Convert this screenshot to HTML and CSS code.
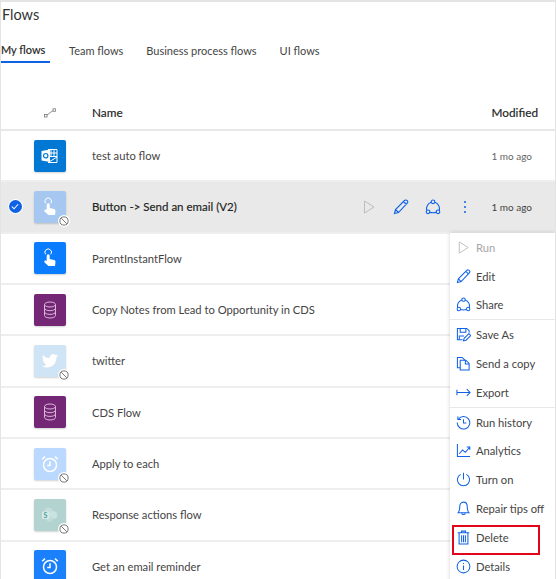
FILE: index.html
```html
<!DOCTYPE html>
<html lang="en">
<head>
<meta charset="utf-8">
<title>Flows</title>
<link rel="stylesheet" href="styles.css">
</head>
<body>
<svg class="defs" width="0" height="0" aria-hidden="true">
  <defs>
    <symbol id="i-touch" viewBox="0 0 20 20">
      <path fill="#fff" d="M8.200 6.200a1.500 1.500 0 0 1 1.500 1.500v3.300l4.400 1.100c.9.200 1.400 1 1.400 1.900l-.5 4H8.400L4.600 14.500c-.5-.6-.4-1.400.2-1.800.6-.4 1.300-.3 1.800.2l.1.100V7.700a1.500 1.500 0 0 1 1.500-1.500z"/>
      <path fill="none" stroke="#fff" stroke-width="1" d="M5.600 8.800a3.300 3.300 0 1 1 5.200 0" transform="translate(0 -2.500)"/>
    </symbol>
    <symbol id="i-db" viewBox="0 0 20 20">
      <g fill="none" stroke="#d9b6d9" stroke-width="1">
        <ellipse cx="10" cy="4.500" rx="5.500" ry="2.500"/>
        <path d="M4.500 4.500v11c0 1.400 2.500 2.500 5.500 2.500s5.500-1.100 5.500-2.500v-11M4.500 8.200c0 1.400 2.500 2.500 5.500 2.500s5.500-1.100 5.500-2.500M4.500 11.900c0 1.400 2.500 2.500 5.500 2.500s5.500-1.100 5.500-2.500"/>
      </g>
    </symbol>
    <symbol id="i-clock" viewBox="0 0 20 20">
      <g fill="none" stroke="#fff" stroke-width="1.500">
        <circle cx="10" cy="11" r="6.500"/>
        <path d="M10 7.200V11.500H7.200M2.200 5.200 5 2.600M17.800 5.200 15 2.600"/>
      </g>
    </symbol>
    <symbol id="i-play" viewBox="0 0 16 16">
      <path fill="none" stroke="currentColor" d="M3.500 2v12L13 8z"/>
    </symbol>
    <symbol id="i-edit" viewBox="0 0 16 16">
      <path fill="none" stroke="currentColor" stroke-width="1.100" d="M1.500 14.500 2.500 10.500 11.500 1.500c.8-.8 2-.7 2.700.1s.7 1.800 0 2.500L5.500 13.500zM2.500 10.500l3 3M10.500 2.500l3 3"/>
    </symbol>
    <symbol id="i-share" viewBox="0 0 16 16">
      <g fill="none" stroke="currentColor" stroke-width="1.100">
        <circle cx="8" cy="2.800" r="1.800"/>
        <circle cx="3" cy="12.800" r="1.800"/>
        <circle cx="13" cy="12.800" r="1.800"/>
        <path d="M6.300 3.300A6.800 6.800 0 0 0 1.700 11.500M9.700 3.300A6.800 6.800 0 0 1 14.300 11.500M4.800 13.400q3.200.8 6.400 0"/>
      </g>
    </symbol>
    <symbol id="i-saveas" viewBox="0 0 16 16">
      <g fill="none" stroke="currentColor" stroke-width="1.100">
        <path d="M7 13.500H1.500v-12h10l2.500 2.500v2"/>
        <path d="M4.500 1.500v4h6v-4M3.500 13.500v-4h5"/>
        <path d="M8 14.800l.7-2.700 5-5 2 2-5 5z"/>
      </g>
    </symbol>
    <symbol id="i-copy" viewBox="0 0 16 16">
      <g fill="none" stroke="currentColor" stroke-width="1.100">
        <path d="M4.500 12.500h-3v-11h5l3 3"/>
        <path d="M4.500 4.500h6l3.500 3.500v7H4.500z"/>
        <path d="M10 4.500V8.500h4"/>
      </g>
    </symbol>
    <symbol id="i-export" viewBox="0 0 16 16">
      <path fill="none" stroke="currentColor" stroke-width="1.100" d="M1 5v6M1 8h14M11.500 4.500 15 8l-3.500 3.500"/>
    </symbol>
    <symbol id="i-history" viewBox="0 0 16 16">
      <g fill="none" stroke="currentColor" stroke-width="1.100">
        <path d="M2.300 4.700A6.700 6.700 0 1 1 1.300 8"/>
        <path d="M2 1.500v3.400h3.400M8 4.500v4h3"/>
      </g>
    </symbol>
    <symbol id="i-analytics" viewBox="0 0 16 16">
      <path fill="none" stroke="currentColor" stroke-width="1.100" d="M1.500 1v13.500H15M3.500 11.500 7 7.500l3 2.500 4.500-5.500M11.500 4.300h3.200v3"/>
    </symbol>
    <symbol id="i-power" viewBox="0 0 16 16">
      <path fill="none" stroke="currentColor" stroke-width="1.100" d="M5 2.500a6.500 6.500 0 1 0 6 0M8 .8v7.200"/>
    </symbol>
    <symbol id="i-bell" viewBox="0 0 16 16">
      <path fill="none" stroke="currentColor" stroke-width="1.100" d="M8 1.200c2.700 0 4 2.200 4 4.800 0 3.500.5 5 1.800 6.500H2.200C3.500 11 4 9.500 4 6c0-2.600 1.300-4.800 4-4.800zM6.200 12.700c0 2.400 3.600 2.400 3.600 0"/>
    </symbol>
    <symbol id="i-trash" viewBox="0 0 16 16">
      <path fill="none" stroke="currentColor" stroke-width="1.100" d="M1.800 3h12.400M5.800 3V1.200h4.400V3M3.300 3v12h9.400V3M6 5.500v7.500M8 5.500v7.500M10 5.500v7.500"/>
    </symbol>
    <symbol id="i-info" viewBox="0 0 16 16">
      <g fill="none" stroke="currentColor" stroke-width="1.100">
        <circle cx="8" cy="8" r="6.800"/>
        <path d="M8 7v4.800M8 4.200v1.200"/>
      </g>
    </symbol>
    <symbol id="i-ban" viewBox="0 0 12 12">
      <circle cx="6" cy="6" r="4.100" fill="none" stroke="#777" stroke-width="1"/>
      <path d="M3.200 3.200l5.600 5.600" stroke="#777" stroke-width="1"/>
    </symbol>
  </defs>
</svg>

<main class="page">
  <h1 class="title">Flows</h1>
  <nav class="tabs">
    <span class="tab tab-active">My flows</span>
    <span class="tab">Team flows</span>
    <span class="tab">Business process flows</span>
    <span class="tab">UI flows</span>
  </nav>

  <div class="list-head">
    <span class="head-icon">
      <svg width="12" height="10" viewBox="0 0 12 10"><g fill="none" stroke="#777" stroke-width=".8"><rect x=".5" y="6.500" width="2.500" height="2.500"/><rect x="9" y=".8" width="2.500" height="2.500"/><path d="M3 7 9 2.500"/></g></svg>
    </span>
    <span class="head-name">Name</span>
    <span class="head-mod">Modified</span>
  </div>

  <div class="row">
    <span class="tile tile-outlook">
      <svg width="20" height="20" viewBox="0 0 20 20"><path fill="none" stroke="#fff" d="M8 3.500h9v13H8M8 7h9M8 10.500h9M11 3.500v7M14 3.500v7M9 16l8-5"/><path fill="#fff" d="M1.500 5 10 3.500v12.500L1.500 14.500z"/><circle cx="5.700" cy="9.700" r="2.200" fill="none" stroke="#0078d4" stroke-width="1.200"/></svg>
    </span>
    <span class="name">test auto flow</span>
    <span class="time">1 mo ago</span>
  </div>

  <div class="row row-selected">
    <span class="check"><svg width="10" height="8" viewBox="0 0 10 8"><path d="M1 4l2.800 2.800L9 1.200" fill="none" stroke="#fff" stroke-width="1.300"/></svg></span>
    <span class="tile tile-button">
      <svg width="20" height="20"><use href="#i-touch"/></svg>
      <span class="badge"><svg width="12" height="12"><use href="#i-ban"/></svg></span>
    </span>
    <span class="name name-strong">Button -&gt; Send an email (V2)</span>
    <span class="actions">
      <svg class="act act-off" width="16" height="16"><use href="#i-play"/></svg>
      <svg class="act" width="16" height="16"><use href="#i-edit"/></svg>
      <svg class="act" width="16" height="16"><use href="#i-share"/></svg>
      <svg class="act" width="16" height="16" viewBox="0 0 16 16"><path d="M8 2v2M8 7v2M8 12v2" stroke="currentColor" stroke-width="1.500"/></svg>
    </span>
    <span class="time">1 mo ago</span>
  </div>

  <div class="row">
    <span class="tile tile-blue"><svg width="20" height="20"><use href="#i-touch"/></svg></span>
    <span class="name">ParentInstantFlow</span>
  </div>

  <div class="row">
    <span class="tile tile-cds"><svg width="20" height="20"><use href="#i-db"/></svg></span>
    <span class="name">Copy Notes from Lead to Opportunity in CDS</span>
  </div>

  <div class="row">
    <span class="tile tile-twitter">
      <svg width="20" height="20" viewBox="0 0 20 20"><path fill="#fff" d="M18 4.500c-.6.300-1.200.400-1.900.500.700-.4 1.200-1 1.400-1.800-.6.400-1.300.6-2 .8a3.300 3.300 0 0 0-5.600 3C7.200 7.300 4.800 6 3.100 4c-.9 1.500-.4 3.400 1 4.400-.5 0-1-.2-1.500-.4 0 1.600 1.100 3 2.600 3.300-.5.100-1 .1-1.500 0 .4 1.300 1.600 2.200 3.100 2.300A6.600 6.600 0 0 1 2 15a9.300 9.300 0 0 0 14.300-8.300c.7-.5 1.200-1.100 1.700-2.200z"/></svg>
      <span class="badge"><svg width="12" height="12"><use href="#i-ban"/></svg></span>
    </span>
    <span class="name">twitter</span>
  </div>

  <div class="row">
    <span class="tile tile-cds"><svg width="20" height="20"><use href="#i-db"/></svg></span>
    <span class="name">CDS Flow</span>
  </div>

  <div class="row">
    <span class="tile tile-clockfade">
      <svg width="20" height="20"><use href="#i-clock"/></svg>
      <span class="badge"><svg width="12" height="12"><use href="#i-ban"/></svg></span>
    </span>
    <span class="name">Apply to each</span>
  </div>

  <div class="row">
    <span class="tile tile-sp">
      <svg width="20" height="20" viewBox="0 0 20 20"><circle cx="8.500" cy="7" r="4.500" fill="#c4dedc"/><circle cx="13.500" cy="10" r="3.800" fill="#c9e3e1"/><circle cx="9.500" cy="14" r="3" fill="#c0dbd9"/><rect x="2" y="6.500" width="7.500" height="7.500" rx="1" fill="#d6eae8"/><text x="3.500" y="12.800" class="sp-letter">S</text></svg>
      <span class="badge"><svg width="12" height="12"><use href="#i-ban"/></svg></span>
    </span>
    <span class="name">Response actions flow</span>
  </div>

  <div class="row">
    <span class="tile tile-blue2"><svg width="20" height="20"><use href="#i-clock"/></svg></span>
    <span class="name">Get an email reminder</span>
  </div>

  <aside class="menu">
    <div class="menu-group">
      <div class="item item-off"><svg class="mi" width="15" height="15"><use href="#i-play"/></svg>Run</div>
      <div class="item"><svg class="mi" width="15" height="15"><use href="#i-edit"/></svg>Edit</div>
      <div class="item"><svg class="mi" width="15" height="15"><use href="#i-share"/></svg>Share</div>
    </div>
    <div class="menu-group">
      <div class="item"><svg class="mi" width="15" height="15"><use href="#i-saveas"/></svg>Save As</div>
      <div class="item"><svg class="mi" width="15" height="15"><use href="#i-copy"/></svg>Send a copy</div>
      <div class="item"><svg class="mi" width="15" height="15"><use href="#i-export"/></svg>Export</div>
    </div>
    <div class="menu-group">
      <div class="item"><svg class="mi" width="15" height="15"><use href="#i-history"/></svg>Run history</div>
      <div class="item"><svg class="mi" width="15" height="15"><use href="#i-analytics"/></svg>Analytics</div>
      <div class="item"><svg class="mi" width="15" height="15"><use href="#i-power"/></svg>Turn on</div>
      <div class="item"><svg class="mi" width="15" height="15"><use href="#i-bell"/></svg>Repair tips off</div>
      <div class="item item-flagged"><svg class="mi" width="15" height="15"><use href="#i-trash"/></svg>Delete</div>
      <div class="item"><svg class="mi" width="15" height="15"><use href="#i-info"/></svg>Details</div>
    </div>
  </aside>
</main>
</body>
</html>
```

FILE: styles.css
```css
* { box-sizing: border-box; }
html, body { margin: 0; height: 100%; overflow: hidden; background: #fff; }
body { font-family: Lato, "Open Sans", "Liberation Sans", sans-serif; color: #333; font-size: 11.200px; }
.defs { position: absolute; }

.page {
  position: relative;
  width: 556px;
  height: 579px;
  overflow: hidden;
  border-top: 2px solid #e4e4e4;
  border-left: 1px solid #e4e4e4;
  border-right: 1px solid #e4e4e4;
}

.title { margin: 0; padding: 3px 0 0 1px; height: 30px; font-size: 14.500px; font-weight: 400; line-height: 20px; color: #333; }

.tabs { display: flex; gap: 23px; height: 31px; font-size: 11px; }
.tab { height: 31px; padding-top: 11px; line-height: 15px; color: #444; }
.tab-active { width: 49px; margin-right: -4px; color: #222; border-bottom: 2px solid #0f62e6; padding-top: 10px; -webkit-text-stroke: .15px #222; }

.list-head {
  display: grid;
  grid-template-columns: 33px 32px 26px 1fr auto;
  align-items: center;
  height: 68px;
  padding: 33px 17px 0 0;
  border-bottom: 2px solid #e8e8e8;
  font-size: 11.800px;
}
.head-icon { grid-column: 2; justify-self: center; display: flex; margin-left: -1px; }
.head-name { grid-column: 4; color: #222; -webkit-text-stroke: .15px #222; }
.head-mod { grid-column: 5; color: #222; -webkit-text-stroke: .15px #222; }

.row {
  display: grid;
  grid-template-columns: 33px 32px 26px 1fr auto auto;
  align-items: center;
  height: 51.330px;
  padding-right: 23px;
  border-bottom: 2px solid #eeeeee;
}
.row-selected { background: #e9e9e9; color: #222; }
.check {
  grid-column: 1;
  justify-self: center;
  margin-left: -5px;
  width: 13px;
  height: 13px;
  border-radius: 50%;
  background: #0f62e6;
  box-shadow: 0 0 0 1px #fff;
  display: flex;
  align-items: center;
  justify-content: center;
}
.check svg { width: 8px; height: 7px; }

.tile {
  grid-column: 2;
  position: relative;
  width: 32px;
  height: 32px;
  border-radius: 2px;
  display: flex;
  align-items: center;
  justify-content: center;
  box-shadow: 0 1px 2px rgba(0, 0, 0, .18);
}
.tile-outlook { background: #0078d4; }
.tile-button { background: #a6c8f0; }
.tile-blue { background: #0a7cff; }
.tile-blue2 { background: #1b80fb; }
.tile-cds { background: #742774; }
.tile-twitter { background: #cfe4f5; }
.tile-clockfade { background: #bbd8ff; }
.tile-sp { background: #b3d3d1; }
.sp-letter { font-size: 7px; font-weight: 700; fill: #4d9c97; }

.badge {
  position: absolute;
  right: -4px;
  bottom: -4px;
  width: 12px;
  height: 12px;
  border-radius: 50%;
  background: #fff;
  display: flex;
}

.name { grid-column: 4; color: #444; white-space: nowrap; }
.name-strong { color: #222; font-size: 11.500px; -webkit-text-stroke: .15px #222; }
.time { grid-column: 6; color: #666; font-size: 10px; }
.row-selected .time { color: #444; }

.actions { grid-column: 5; display: flex; gap: 16px; margin-right: 18px; color: #0f62e6; }
.act-off { color: #bdbdbd; }

.menu {
  position: absolute;
  left: 449px;
  top: 231px;
  width: 105px;
  background: #fff;
  box-shadow: 0 0 4px rgba(0, 0, 0, .18);
}
.menu-group { border-bottom: 1px solid #e8e8e8; }
.item {
  position: relative;
  display: flex;
  align-items: center;
  gap: 5px;
  height: 28.800px;
  padding-left: 6px;
  color: #444;
  white-space: nowrap;
}
.mi { flex: none; color: #0f62e6; }
.item-off { color: #a6a6a6; }
.item-off .mi { color: #bdbdbd; }
.item-flagged::after {
  content: "";
  position: absolute;
  left: 2px;
  top: 2px;
  width: 84px;
  height: 26px;
  border: 2px solid #e3051b;
}
```
